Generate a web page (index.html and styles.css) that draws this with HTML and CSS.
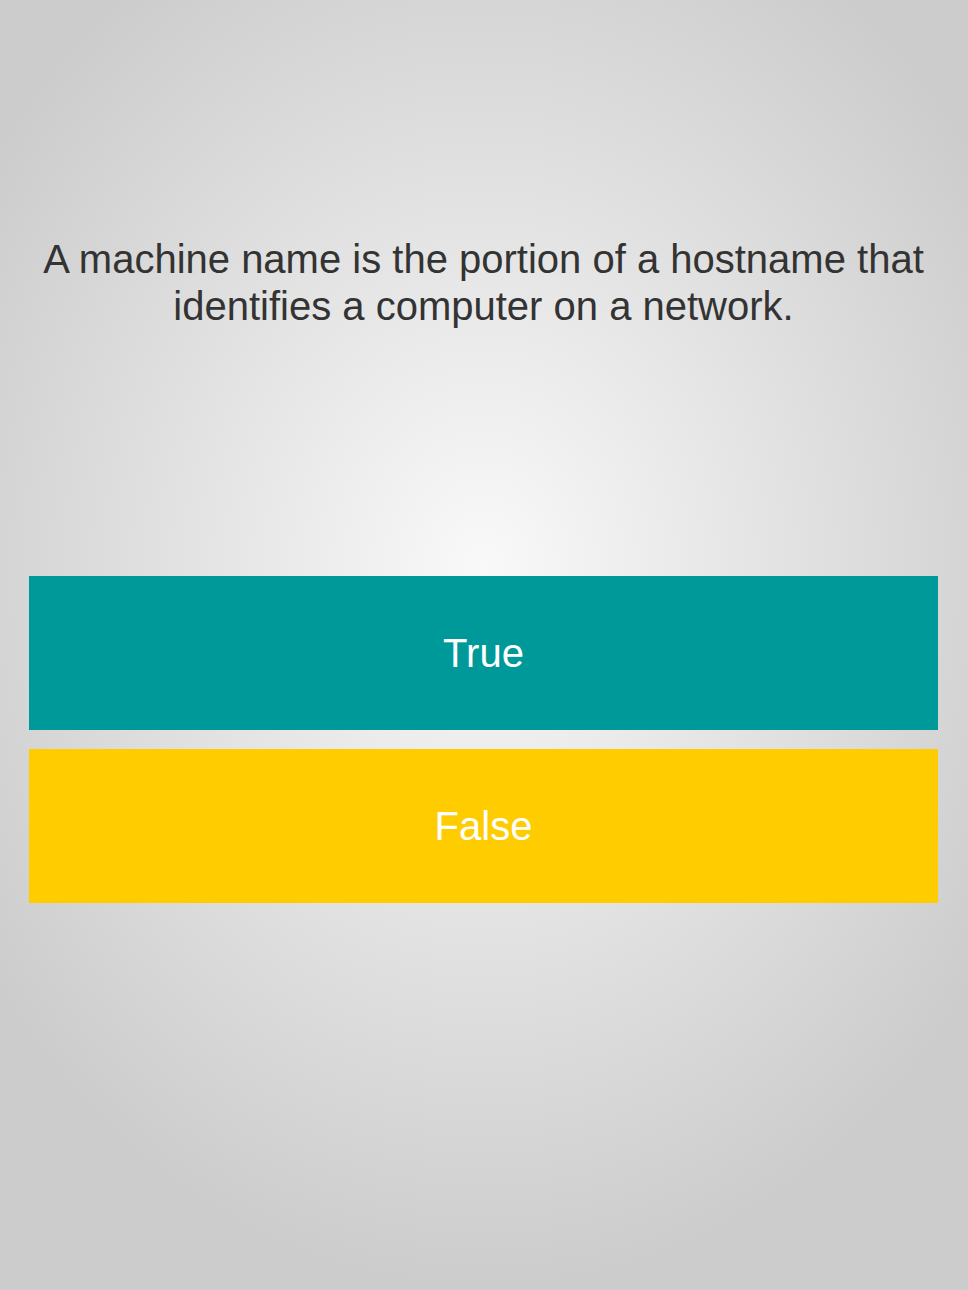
FILE: index.html
```html
<!DOCTYPE html>
<html lang="en">
<head>
<meta charset="utf-8">
<title>Quiz</title>
<link rel="stylesheet" href="styles.css">
</head>
<body>
<main class="quiz">
  <p class="question">A machine name is the portion of a hostname that identifies a computer on a network.</p>
  <div class="answers">
    <button class="answer answer-true">True</button>
    <button class="answer answer-false">False</button>
  </div>
</main>
</body>
</html>
```

FILE: styles.css
```css
html, body {
  margin: 0;
  height: 100%;
}

body {
  background: radial-gradient(ellipse 62% 56% at 50% 44%, #f9f9f9 0%, #cccccc 100%);
  background-color: #cccccc;
  font-family: "Liberation Sans", Arial, sans-serif;
}

.quiz {
  display: flex;
  flex-direction: column;
  min-height: 100%;
  padding: 0 30px 0 29px;
  box-sizing: border-box;
}

.question {
  margin: 236px 0 0;
  font-size: 40px;
  line-height: 47px;
  color: #333333;
  text-align: center;
}

.answers {
  display: flex;
  flex-direction: column;
  gap: 19px;
  margin-top: 246px;
}

.answer {
  display: block;
  width: 100%;
  height: 154px;
  border: 0;
  margin: 0;
  padding: 0;
  font-family: inherit;
  font-size: 40px;
  color: #ffffff;
  cursor: pointer;
}

.answer-true {
  background: #009999;
}

.answer-false {
  background: #ffcc00;
}
```
